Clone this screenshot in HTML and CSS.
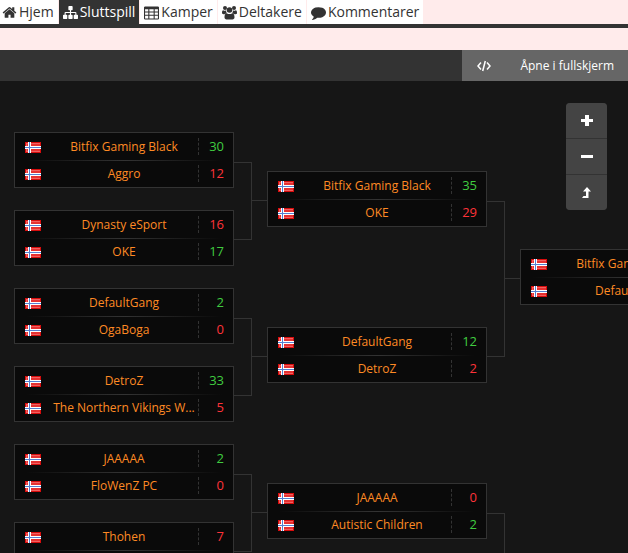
FILE: index.html
```html
<!DOCTYPE html>
<html lang="no">
<head>
    <meta charset="UTF-8">
    <meta name="viewport" content="width=device-width, initial-scale=1.0">
    <title>Sluttspill</title>
    <link rel="stylesheet" href="styles.css">
</head>
<body>

<!-- Shared shapes -->
<svg class="sprites" aria-hidden="true">
    <symbol id="flag-no" viewBox="0 0 16 11">
        <rect width="16" height="11" fill="#d80d0d"/>
        <rect x="1" y="1" width="14" height="9" fill="#f06060"/>
        <rect x="2" y="2" width="13" height="7" fill="#e63232"/>
        <path d="M3 0h3v11H3zM0 4h16v3H0z" fill="#fff"/>
        <path d="M4 0h1v11H4zM0 5h16v1H0z" fill="#5580d0"/>
    </symbol>
</svg>

<nav class="tabs">
    <a class="tab" href="#">
        <svg class="icon" viewBox="0 0 1792 1792"><path d="M1472 992v480q0 26-19 45t-45 19h-384v-384h-256v384h-384q-26 0-45-19t-19-45v-480q0-1 .5-3t.5-3l575-474 575 474q1 2 1 6zm223-69l-62 74q-8 9-21 11h-3q-13 0-21-7l-692-577-692 577q-12 8-24 7-13-2-21-11l-62-74q-8-10-7-23.5t11-21.5l719-599q32-26 76-26t76 26l244 204v-195q0-14 9-23t23-9h192q14 0 23 9t9 23v408l219 182q10 8 11 21.5t-7 23.5z"/></svg>
        Hjem
    </a>
    <a class="tab active" href="#">
        <svg class="icon" viewBox="0 0 1792 1792"><path d="M1792 1248v320q0 40-28 68t-68 28h-320q-40 0-68-28t-28-68v-320q0-40 28-68t68-28h96v-192h-512v192h96q40 0 68 28t28 68v320q0 40-28 68t-68 28h-320q-40 0-68-28t-28-68v-320q0-40 28-68t68-28h96v-192h-512v192h96q40 0 68 28t28 68v320q0 40-28 68t-68 28h-320q-40 0-68-28t-28-68v-320q0-40 28-68t68-28h96v-192q0-52 38-90t90-38h512v-192h-96q-40 0-68-28t-28-68v-320q0-40 28-68t68-28h320q40 0 68 28t28 68v320q0 40-28 68t-68 28h-96v192h512q52 0 90 38t38 90v192h96q40 0 68 28t28 68z"/></svg>
        Sluttspill
    </a>
    <a class="tab" href="#">
        <svg class="icon" viewBox="0 0 14 14"><path fill-rule="evenodd" d="M1.500 1.500h11A1.300 1.300 0 0 1 14 3v9a1.300 1.300 0 0 1-1.500 1.500h-11A1.300 1.300 0 0 1 0 12V3a1.300 1.300 0 0 1 1.500-1.500zM1 4v2h3V4zM5 4v2h4V4zM10 4v2h3V4zM1 7v2h3V7zM5 7v2h4V7zM10 7v2h3V7zM1 10v2.500h3V10zM5 10v2.500h4V10zM10 10v2.500h3V10z"/></svg>
        Kamper
    </a>
    <a class="tab" href="#">
        <svg class="icon" viewBox="0 0 15 14"><circle cx="3" cy="2.500" r="2"/><circle cx="12" cy="2.500" r="2"/><circle cx="7.500" cy="4.500" r="2.800"/><path d="M0 7.500C0 6 .3 4.700 1.300 4.700c.6.500 1.600.7 2.700.4 0 1 .3 1.900.9 2.600-1 0-1.700.3-2.300 1H1.500C.6 8.700 0 8.300 0 7.500zM15 7.500c0-1.500-.3-2.800-1.300-2.800-.6.500-1.600.7-2.700.4 0 1-.3 1.900-.9 2.600 1 0 1.700.3 2.300 1h1.100c.9 0 1.500-.4 1.500-1.200zM2.500 11.800c0-2.300.6-4.100 2.300-4.100 1.600 1.200 3.800 1.200 5.400 0 1.700 0 2.300 1.800 2.300 4.100 0 1.300-.8 2.200-2 2.200h-6c-1.200 0-2-.9-2-2.200z"/></svg>
        Deltakere
    </a>
    <a class="tab" href="#">
        <svg class="icon" viewBox="0 0 1792 1792"><path d="M1792 896q0 174-120 321.500t-326 233-450 85.500q-70 0-145-8-198 175-460 242-49 14-114 22-17 2-30.500-9t-17.500-29v-1q-3-4-.5-12t2-10 4.500-9.500l6-9 7-8.500 8-9q7-8 31-34.500t34.500-38 31-39.500 32.500-51 27-59 26-76q-157-89-247.500-220t-90.500-281q0-130 71-248.500t191-204.500 286-136.500 348-50.500q244 0 450 85.500t326 233 120 321.500z"/></svg>
        Kommentarer
    </a>
</nav>

<div class="toolbar">
    <button class="embed-btn" aria-label="Embed">
        <svg viewBox="0 0 14 12" width="14" height="12"><path d="M4 2.500L1 6l3 3.500M10 2.500L13 6l-3 3.500M8.300 1L5.700 11" fill="none" stroke="#fff" stroke-width="1.500"/></svg>
    </button>
    <a class="fullscreen" href="#">Åpne i fullskjerm</a>
</div>

<main class="stage">
    <div class="bracket">
        <section class="round round-1">
            <div class="pair">
                <div class="matches">
                    <div class="match">
                        <div class="team win"><svg class="flag"><use href="#flag-no"/></svg><span class="name">Bitfix Gaming Black</span><span class="score">30</span></div>
                        <div class="team"><svg class="flag"><use href="#flag-no"/></svg><span class="name">Aggro</span><span class="score">12</span></div>
                    </div>
                    <div class="match">
                        <div class="team"><svg class="flag"><use href="#flag-no"/></svg><span class="name">Dynasty eSport</span><span class="score">16</span></div>
                        <div class="team win"><svg class="flag"><use href="#flag-no"/></svg><span class="name">OKE</span><span class="score">17</span></div>
                    </div>
                </div>
                <div class="connector"></div>
            </div>
            <div class="pair">
                <div class="matches">
                    <div class="match">
                        <div class="team win"><svg class="flag"><use href="#flag-no"/></svg><span class="name">DefaultGang</span><span class="score">2</span></div>
                        <div class="team"><svg class="flag"><use href="#flag-no"/></svg><span class="name">OgaBoga</span><span class="score">0</span></div>
                    </div>
                    <div class="match">
                        <div class="team win"><svg class="flag"><use href="#flag-no"/></svg><span class="name">DetroZ</span><span class="score">33</span></div>
                        <div class="team"><svg class="flag"><use href="#flag-no"/></svg><span class="name">The Northern Vikings W...</span><span class="score">5</span></div>
                    </div>
                </div>
                <div class="connector"></div>
            </div>
            <div class="pair">
                <div class="matches">
                    <div class="match">
                        <div class="team win"><svg class="flag"><use href="#flag-no"/></svg><span class="name">JAAAAA</span><span class="score">2</span></div>
                        <div class="team"><svg class="flag"><use href="#flag-no"/></svg><span class="name">FloWenZ PC</span><span class="score">0</span></div>
                    </div>
                    <div class="match">
                        <div class="team"><svg class="flag"><use href="#flag-no"/></svg><span class="name">Thohen</span><span class="score">7</span></div>
                        <div class="team"></div>
                    </div>
                </div>
                <div class="connector"></div>
            </div>
        </section>

        <section class="round round-2">
            <div class="pair">
                <div class="matches">
                    <div class="match">
                        <div class="team win"><svg class="flag"><use href="#flag-no"/></svg><span class="name">Bitfix Gaming Black</span><span class="score">35</span></div>
                        <div class="team"><svg class="flag"><use href="#flag-no"/></svg><span class="name">OKE</span><span class="score">29</span></div>
                    </div>
                    <div class="match">
                        <div class="team win"><svg class="flag"><use href="#flag-no"/></svg><span class="name">DefaultGang</span><span class="score">12</span></div>
                        <div class="team"><svg class="flag"><use href="#flag-no"/></svg><span class="name">DetroZ</span><span class="score">2</span></div>
                    </div>
                </div>
                <div class="connector"></div>
            </div>
            <div class="pair">
                <div class="matches">
                    <div class="match">
                        <div class="team"><svg class="flag"><use href="#flag-no"/></svg><span class="name">JAAAAA</span><span class="score">0</span></div>
                        <div class="team win"><svg class="flag"><use href="#flag-no"/></svg><span class="name">Autistic Children</span><span class="score">2</span></div>
                    </div>
                    <div class="match">
                        <div class="team"></div>
                        <div class="team"></div>
                    </div>
                </div>
                <div class="connector"></div>
            </div>
        </section>

        <section class="round round-3">
            <div class="match">
                <div class="team"><svg class="flag"><use href="#flag-no"/></svg><span class="name">Bitfix Gaming Black</span><span class="score"></span></div>
                <div class="team"><svg class="flag"><use href="#flag-no"/></svg><span class="name">DefaultGang</span><span class="score"></span></div>
            </div>
        </section>
    </div>

    <div class="zoom-controls">
        <button aria-label="Zoom in"><svg viewBox="0 0 12 12"><path d="M4 0h4v4h4v3H8v4H4V7H0V4h4z"/></svg></button>
        <button aria-label="Zoom out"><svg viewBox="0 0 12 12"><path d="M0 4h12v3H0z"/></svg></button>
        <button aria-label="Reset"><svg viewBox="0 0 12 12"><path d="M6 0l4 4.500H7.500V11H1l1.500-2H5V4.500H2z"/></svg></button>
    </div>
</main>

</body>
</html>
```

FILE: styles.css
```css
*,
*::before,
*::after {
    box-sizing: border-box;
}
body {
    display: flex;
    flex-direction: column;
    height: 100vh;
    margin: 0;
    overflow: hidden;
    background-color: #ffebeb;
    font-family: "Open Sans", "Noto Sans", sans-serif;
    font-size: 12px;
}
button {
    padding: 0;
    border: none;
    cursor: pointer;
}
.sprites {
    display: none;
}

/* Tabs */
.tabs {
    display: flex;
    gap: 1px;
    height: 28px;
    margin-left: -2px;
    border-bottom: 4px solid #333;
}
.tab {
    display: flex;
    align-items: center;
    gap: 2px;
    padding: 0 4px;
    background: white;
    color: #333;
    font-size: 14px;
    line-height: 24px;
    text-decoration: none;
}
.tab.active {
    background: #333;
    color: white;
}
.icon {
    width: 15px;
    height: 15px;
    fill: currentColor;
}

/* Toolbar */
.toolbar {
    display: flex;
    justify-content: flex-end;
    height: 31px;
    margin-top: 22px;
    background: #333;
}
.embed-btn,
.fullscreen {
    display: flex;
    align-items: center;
    justify-content: center;
    background: #666;
    color: white;
    text-decoration: none;
}
.embed-btn {
    width: 44px;
}
.fullscreen {
    padding: 0 14px;
}

/* Bracket */
.stage {
    position: relative;
    flex: 1;
    min-height: 0;
    overflow: hidden;
    padding: 51px 0 0 14px;
    background: #161616;
}
.bracket {
    display: flex;
}
.round {
    flex: none;
}
.round,
.matches {
    display: flex;
    flex-direction: column;
    gap: 22px;
}
.round-2 {
    padding-top: 39px;
}
.round-2,
.round-2 .matches {
    gap: 100px;
}
.round-3 {
    padding-top: 117px;
}
.pair {
    display: flex;
}
.match {
    width: 220px;
    border: 1px solid #333;
    background: #0a0a0a;
}
.team {
    display: flex;
    align-items: center;
    height: 27px;
    padding-left: 10px;
    color: #ff3339;
}
.team + .team {
    background: linear-gradient(to right, transparent 5%, #333 50%, transparent 95%) top / 100% 1px no-repeat;
}
.team.win {
    color: #40cc40;
}
.flag {
    flex: none;
    width: 16px;
    height: 11px;
    margin-top: 1px;
}
.name {
    flex: 1;
    margin-left: 9px;
    overflow: hidden;
    color: #ff8a24;
    text-align: center;
    white-space: nowrap;
}
.score {
    width: 35px;
    height: 17px;
    padding-right: 9px;
    border-left: 1px dashed #333;
    font-size: 13px;
    line-height: 17px;
    text-align: right;
}

/* Lines between rounds */
.connector {
    display: flex;
    align-items: center;
    margin: 30px 0 26px;
}
.connector::before {
    content: "";
    align-self: stretch;
    width: 18px;
    border: 1px solid #333;
    border-left: none;
}
.connector::after {
    content: "";
    width: 15px;
    height: 2px;
    border-top: 1px solid #333;
}

/* Zoom buttons */
.zoom-controls {
    position: absolute;
    top: 22px;
    right: 21px;
    display: flex;
    flex-direction: column;
    gap: 1px;
    overflow: hidden;
    border-radius: 4px;
    background: #333;
}
.zoom-controls button {
    display: flex;
    align-items: center;
    justify-content: center;
    width: 41px;
    height: 35px;
    background: #444;
}
.zoom-controls svg {
    width: 12px;
    height: 12px;
    fill: white;
}
```
